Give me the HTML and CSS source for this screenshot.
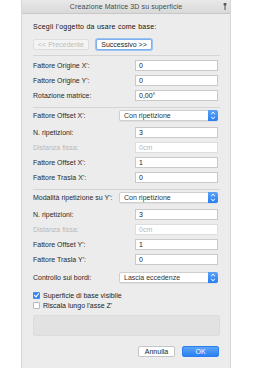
FILE: index.html
```html
<!DOCTYPE html>
<html lang="it">
<head>
    <meta charset="UTF-8">
    <title>Creazione Matrice 3D su superficie</title>
    <link rel="stylesheet" href="styles.css">
</head>
<body>
    <div class="dialog">
        <div class="titlebar">
            <span class="title">Creazione Matrice 3D su superficie</span>
            <svg class="help" width="4" height="7" viewBox="0 0 4 7">
                <rect x="0.5" y="0" width="3" height="2.5" rx="1" fill="#555"/>
                <rect x="1.5" y="2" width="1" height="5" fill="#555"/>
            </svg>
        </div>
        <div class="content">
            <p class="heading">Scegli l'oggetto da usare come base:</p>
            <div class="nav">
                <div class="btn disabled">&lt;&lt; Precedente</div>
                <div class="btn focused">Successivo &gt;&gt;</div>
            </div>
            <div class="sep"></div>

            <div class="section">
                <div class="row"><span class="label">Fattore Origine X':</span><div class="field">0</div></div>
                <div class="row"><span class="label">Fattore Origine Y':</span><div class="field">0</div></div>
                <div class="row"><span class="label">Rotazione matrice:</span><div class="field">0,00°</div></div>
            </div>
            <div class="sep"></div>

            <div class="section">
                <div class="row sel-row first"><span class="label">Fattore Offset X':</span><div class="select">Con ripetizione<span class="arrows"></span></div></div>
                <div class="row after-sel"><span class="label">N. ripetizioni:</span><div class="field">3</div></div>
                <div class="row dim"><span class="label">Distanza fissa:</span><div class="field">0cm</div></div>
                <div class="row"><span class="label">Fattore Offset X':</span><div class="field">1</div></div>
                <div class="row"><span class="label">Fattore Trasla X':</span><div class="field">0</div></div>
            </div>
            <div class="sep"></div>

            <div class="section">
                <div class="row sel-row first"><span class="label">Modalità ripetizione su Y':</span><div class="select">Con ripetizione<span class="arrows"></span></div></div>
                <div class="row after-sel"><span class="label">N. ripetizioni:</span><div class="field">3</div></div>
                <div class="row dim"><span class="label">Distanza fissa:</span><div class="field">0cm</div></div>
                <div class="row"><span class="label">Fattore Offset Y':</span><div class="field">1</div></div>
                <div class="row"><span class="label">Fattore Trasla Y':</span><div class="field">0</div></div>
                <div class="row sel-row bordi"><span class="label">Controllo sui bordi:</span><div class="select">Lascia eccedenze<span class="arrows"></span></div></div>
            </div>

            <div class="checks">
                <div class="check"><span class="box checked"></span>Superficie di base visibile</div>
                <div class="check"><span class="box"></span>Riscala lungo l'asse Z'</div>
            </div>

            <div class="preview"></div>

            <div class="actions">
                <div class="btn">Annulla</div>
                <div class="btn primary">OK</div>
            </div>
        </div>
    </div>
</body>
</html>
```

FILE: styles.css
```css
body {
    margin: 0;
    background-color: #ffffff;
    font-family: 'Liberation Sans', Arial, sans-serif;
    font-size: 7px;
    color: #333;
}
.dialog {
    margin-left: 22px;
    width: 208px;
    height: 368px;
    background-color: #ececec;
    box-shadow: 0 0 0 1px #d6d6d6;
    box-sizing: border-box;
}
.titlebar {
    height: 13px;
    border-bottom: 1px solid #c8c8c8;
    background: linear-gradient(#e9e9e9, #d9d9d9);
    display: flex;
    align-items: center;
    justify-content: center;
    position: relative;
}
.title {
    color: #4a4a4a;
    font-size: 7px;
    letter-spacing: 0.1px;
}
.help {
    position: absolute;
    right: 3px;
    top: 3px;
}
.content {
    padding: 0 10px 0 11px;
}
.heading {
    margin: 8px 0 0;
    height: 10px;
    line-height: 10px;
    color: #111;
    letter-spacing: 0.25px;
}
.nav {
    display: flex;
    gap: 7px;
    margin-top: 7px;
}
.btn {
    height: 11px;
    width: 56px;
    box-sizing: border-box;
    border: 1px solid #c6c6c6;
    border-radius: 2px;
    background-color: #fff;
    display: flex;
    align-items: center;
    justify-content: center;
    color: #222;
}
.btn.disabled {
    background-color: #f4f4f4;
    border-color: #dedede;
    color: #bdbdbd;
}
.btn.focused {
    border-color: #7fb0ee;
    box-shadow: 0 0 0 1px #9cc2f2;
}
.sep {
    height: 1px;
    background-color: #d5d5d5;
    margin-top: 5px;
}
.section {
    display: flex;
    flex-direction: column;
    gap: 4px;
    padding-top: 4px;
    padding-bottom: 1px;
}
.row {
    display: grid;
    grid-template-columns: 102px 83px;
    height: 11px;
    align-items: center;
}
.row.sel-row {
    grid-template-columns: 86px 99px;
}
.row.first {
    margin-top: -2px;
}
.row.after-sel {
    margin-top: 2px;
}
.row.bordi {
    margin-top: 3px;
}
.label {
    color: #2a2a2a;
    white-space: nowrap;
}
.field {
    height: 11px;
    box-sizing: border-box;
    border: 1px solid #c9c9c9;
    background-color: #fff;
    padding-left: 3px;
    line-height: 9px;
    color: #222;
}
.row.dim .label,
.row.dim .field {
    color: #b8b8b8;
}
.row.dim .field {
    border-color: #dedede;
}
.select {
    height: 11px;
    box-sizing: border-box;
    border: 1px solid #cfcfcf;
    border-radius: 2px;
    background-color: #fff;
    padding-left: 4px;
    line-height: 9px;
    position: relative;
    box-shadow: 0 1px 0 rgba(0,0,0,0.06);
}
.arrows {
    position: absolute;
    right: -1px;
    top: -1px;
    width: 10px;
    height: 11px;
    border-radius: 0 2px 2px 0;
    background: linear-gradient(#5aa2f8, #2a7ff4);
}
.arrows::before,
.arrows::after {
    content: "";
    position: absolute;
    left: 3px;
    width: 3px;
    height: 3px;
    border-left: 1px solid #fff;
    border-top: 1px solid #fff;
}
.arrows::before {
    top: 2px;
    transform: scale(0.8) rotate(45deg);
}
.arrows::after {
    top: 5px;
    transform: scale(0.8) rotate(225deg);
}
.checks {
    margin-top: 6px;
}
.check {
    display: flex;
    align-items: center;
    height: 10px;
    gap: 3px;
    color: #222;
}
.box {
    width: 7px;
    height: 7px;
    box-sizing: border-box;
    border: 1px solid #b9b9b9;
    border-radius: 1px;
    background-color: #fff;
    position: relative;
}
.box.checked {
    border: none;
    background-color: #3a8af5;
}
.box.checked::after {
    content: "";
    position: absolute;
    left: 2px;
    top: 0.5px;
    width: 2px;
    height: 4px;
    border-right: 1px solid #fff;
    border-bottom: 1px solid #fff;
    transform: rotate(40deg);
}
.preview {
    margin-top: 5px;
    height: 19px;
    border: 1px solid #dcdcdc;
    border-radius: 2px;
    background-color: #e2e2e2;
}
.actions {
    display: flex;
    justify-content: flex-end;
    gap: 7px;
    margin-top: 10px;
    padding-right: 1px;
}
.actions .btn {
    width: 37px;
}
.btn.primary {
    border-color: #2a7ef2;
    background: linear-gradient(#5ea5f8, #2b80f5);
    color: #fff;
}
```
